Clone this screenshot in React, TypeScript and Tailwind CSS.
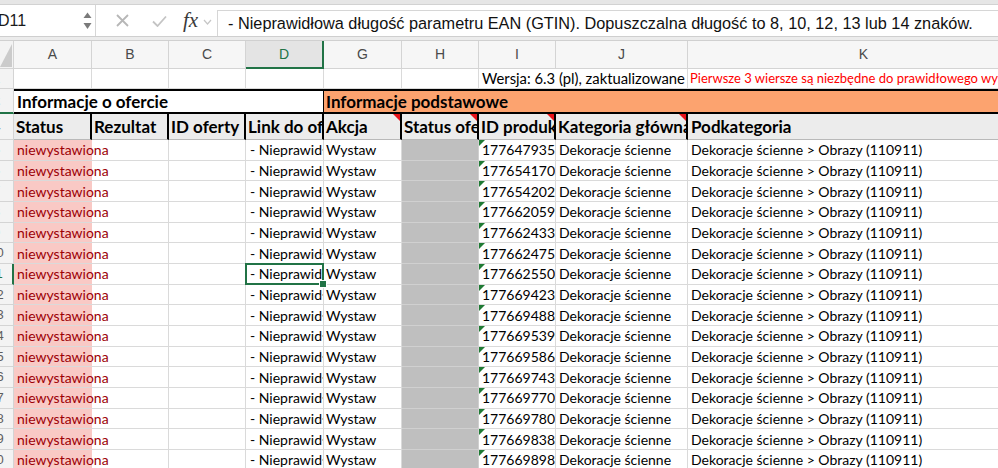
import React from "react";

const ids = [
  "1776479353",
  "1776541705",
  "1776542026",
  "1776620593",
  "1776624337",
  "1776624758",
  "1776625509",
  "1776694231",
  "1776694888",
  "1776695390",
  "1776695869",
  "1776697430",
  "1776697707",
  "1776697809",
  "1776698387",
  "1776698983",
];

const cellFont = { fontFamily: "Lato, 'Open Sans', sans-serif" };

function RedMark() {
  return (
    <svg className="absolute right-0 top-0" width="7" height="7">
      <polygon points="0,0 7,0 7,7" fill="#e8141b" />
    </svg>
  );
}

function GreenMark() {
  return (
    <svg className="absolute left-0 top-0" width="6" height="6">
      <polygon points="0,0 6,0 0,6" fill="#1f7a34" />
    </svg>
  );
}

function RowHead({
  n,
  active,
  className = "",
}: {
  n: string;
  active?: boolean;
  className?: string;
}) {
  return (
    <div
      className={`flex w-[34px] shrink-0 items-center justify-center border-b border-r border-[#d4d4d4] bg-[#f3f3f3] text-[13px] ${
        active ? "border-r-2 border-r-[#217346] text-[#217346]" : "text-[#5e5e5e]"
      } ${className}`}
      style={{ fontFamily: "'Liberation Sans', sans-serif" }}
    >
      {n}
    </div>
  );
}

export default function App() {
  return (
    <div className="h-[468px] w-[998px] overflow-hidden bg-white">
      {/* formula bar */}
      <div className="h-[5px] border-b border-[#d2d2d2] bg-[#e6e6e6]" />
      <div
        className="flex h-[32px] items-stretch border-b border-[#cfcfcf] bg-white"
        style={{ fontFamily: "'Liberation Sans', sans-serif" }}
      >
        <div className="relative flex w-[96px] shrink-0 items-center border-r border-[#d6d6d6] pl-0">
          <span className="-ml-[2px] text-[16px] text-[#1a1a1a]">D11</span>
          <svg className="absolute left-[83px] top-[7px]" width="9" height="18">
            <polygon points="0.5,6 4.5,0.5 8.5,6" fill="#7a7a7a" />
            <polygon points="0.5,11 8.5,11 4.5,17" fill="#7a7a7a" />
          </svg>
        </div>
        <div className="flex w-[121px] shrink-0 items-center">
          <svg className="ml-[20px]" width="13" height="13">
            <path d="M1 1 L12 12 M12 1 L1 12" stroke="#b7b7b7" strokeWidth="1.8" />
          </svg>
          <svg className="ml-[23px]" width="15" height="12">
            <path d="M1 6.5 L5.5 11 L14 1.5" stroke="#c4c4c4" strokeWidth="1.8" fill="none" />
          </svg>
          <span
            className="ml-[16px] text-[21px] italic leading-none text-[#3a3a3a]"
            style={{ fontFamily: "'Liberation Serif', serif" }}
          >
            fx
          </span>
          <svg className="ml-[5px] mt-[3px]" width="9" height="6">
            <path d="M1 1 L4.5 5 L8 1" stroke="#c6c6c6" strokeWidth="1.2" fill="none" />
          </svg>
        </div>
        <div className="mt-[5px] flex flex-1 items-center overflow-hidden whitespace-nowrap border-l border-t border-[#d6d6d6] pl-[10px] text-[16.3px] text-[#111]">
          - Nieprawidłowa długość parametru EAN (GTIN). Dopuszczalna długość to 8, 10, 12, 13 lub 14 znaków.
        </div>
      </div>
      <div className="h-[4px] border-b border-[#d0d0d0] bg-[#ececec]" />

      {/* sheet */}
      <div className="-ml-[20px] w-[1060px]">
        {/* column headers */}
        <div
          className="flex h-[28px] text-[14px] text-[#4a4a4a]"
          style={{ fontFamily: "'Liberation Sans', sans-serif" }}
        >
          <div className="relative w-[34px] shrink-0 border-b border-r border-[#d4d4d4] bg-[#f3f3f3]">
            <svg className="absolute left-[20px] top-[3px]" width="12" height="23">
              <polygon points="12,0 12,23 0,23" fill="#cbcbcb" />
            </svg>
          </div>
          <div className="flex w-[78px] shrink-0 items-center justify-center border-b border-r border-[#d4d4d4] bg-[#f6f6f6]">A</div>
          <div className="flex w-[77px] shrink-0 items-center justify-center border-b border-r border-[#d4d4d4] bg-[#f6f6f6]">B</div>
          <div className="flex w-[77px] shrink-0 items-center justify-center border-b border-r border-[#d4d4d4] bg-[#f6f6f6]">C</div>
          <div className="flex w-[78px] shrink-0 items-center justify-center border-b-2 border-r-2 border-[#217346] bg-[#e4e4e4] text-[#217346]">D</div>
          <div className="flex w-[78px] shrink-0 items-center justify-center border-b border-r border-[#d4d4d4] bg-[#f6f6f6]">G</div>
          <div className="flex w-[77px] shrink-0 items-center justify-center border-b border-r border-[#d4d4d4] bg-[#f6f6f6]">H</div>
          <div className="flex w-[77px] shrink-0 items-center justify-center border-b border-r border-[#d4d4d4] bg-[#f6f6f6]">I</div>
          <div className="flex w-[132px] shrink-0 items-center justify-center border-b border-r border-[#d4d4d4] bg-[#f6f6f6]">J</div>
          <div className="flex w-[352px] shrink-0 items-center justify-center border-b border-r border-[#d4d4d4] bg-[#f6f6f6]">K</div>
        </div>

        {/* row 1 */}
        <div className="flex h-[20px] text-[14px] text-black" style={cellFont}>
          <RowHead n="1" />
          <div className="w-[78px] shrink-0 border-b border-r border-[#dadada]" />
          <div className="w-[77px] shrink-0 border-b border-r border-[#dadada]" />
          <div className="w-[77px] shrink-0 border-b border-r border-[#dadada]" />
          <div className="w-[78px] shrink-0 border-b border-r border-[#dadada]" />
          <div className="w-[78px] shrink-0 border-b border-r border-[#dadada]" />
          <div className="w-[77px] shrink-0 border-b border-r border-[#dadada]" />
          <div className="flex w-[209px] shrink-0 items-center overflow-hidden whitespace-nowrap border-b border-r border-[#dadada] pl-[3px] text-[14.8px]">
            Wersja: 6.3 (pl), zaktualizowane
          </div>
          <div className="flex w-[352px] shrink-0 items-center overflow-hidden whitespace-nowrap border-b border-[#dadada] pl-[2px] text-[13px] text-[#ff0000]">
            Pierwsze 3 wiersze są niezbędne do prawidłowego wystawienia ofert
          </div>
        </div>

        {/* row 2 */}
        <div className="flex h-[25px] text-[17px] font-bold text-black" style={cellFont}>
          <RowHead n="2" className="border-b-2 border-b-[#217346]" />
          <div className="flex w-[310px] shrink-0 items-center border-y-2 border-r border-black bg-white pl-[3px]">
            Informacje o ofercie
          </div>
          <div className="flex w-[716px] shrink-0 items-center border-y-2 border-black bg-[#fca36f] pl-[2px]">
            Informacje podstawowe
          </div>
        </div>

        {/* row 4 */}
        <div className="flex h-[26px] text-[17px] font-bold text-black" style={cellFont}>
          <RowHead n="4" />
          {[
            ["w-[78px]", "Status", false],
            ["w-[77px]", "Rezultat", false],
            ["w-[77px]", "ID oferty", false],
            ["w-[78px]", "Link do oferty", false],
            ["w-[78px]", "Akcja", true],
            ["w-[77px]", "Status oferty", true],
            ["w-[77px]", "ID produktu", true],
            ["w-[132px]", "Kategoria główna", true],
          ].map(([w, label, mark]) => (
            <div
              key={label as string}
              className={`relative flex ${w} shrink-0 items-center overflow-hidden whitespace-nowrap border-b border-r-2 border-b-[#b9b9b9] border-r-black bg-[#ececec] pl-[2px]`}
            >
              {label}
              {mark ? <RedMark /> : null}
            </div>
          ))}
          <div className="flex w-[352px] shrink-0 items-center border-b border-[#b9b9b9] bg-[#ececec] pl-[3px]">
            Podkategoria
          </div>
        </div>

        {/* data rows */}
        {ids.map((id, i) => {
          const n = i + 5;
          const active = n === 11;
          return (
            <div key={id} className="flex h-[20.67px] text-[14px] text-black" style={cellFont}>
              <RowHead n={String(n)} active={active} />
              <div className="flex w-[78px] shrink-0 items-center whitespace-nowrap border-b border-[#dadada] bg-[#f9c9c5] pl-[3px] text-[#9c0006]">
                niewystawiona
              </div>
              <div className="w-[77px] shrink-0 border-b border-r border-[#dadada]" />
              <div className="w-[77px] shrink-0 border-b border-r border-[#dadada]" />
              <div className="relative flex w-[78px] shrink-0 items-center border-b border-r border-[#dadada]">
                <div className="w-full overflow-hidden whitespace-nowrap pl-[4px]">
                  - Nieprawidłowa długość parametru EAN (GTIN).
                </div>
                {active ? (
                  <div className="absolute -bottom-[1px] -left-[1px] -right-[1px] -top-[1px] z-10 border-2 border-[#217346]">
                    <div className="absolute -bottom-[4px] -right-[4px] h-[6px] w-[6px] bg-[#217346] outline outline-1 outline-white" />
                  </div>
                ) : null}
              </div>
              <div className="flex w-[78px] shrink-0 items-center border-b border-r border-[#dadada] pl-[2px]">
                Wystaw
              </div>
              <div className="w-[77px] shrink-0 border-b border-r border-[#d0d0d0] bg-[#bfbfbf]" />
              <div className="relative flex w-[77px] shrink-0 items-center overflow-hidden whitespace-nowrap border-b border-r border-[#dadada] pl-[3px]">
                {id}12
                <GreenMark />
              </div>
              <div className="flex w-[132px] shrink-0 items-center border-b border-r border-[#dadada] pl-[3px]">
                Dekoracje ścienne
              </div>
              <div className="flex w-[352px] shrink-0 items-center border-b border-[#dadada] pl-[3px]">
                Dekoracje ścienne &gt; Obrazy (110911)
              </div>
            </div>
          );
        })}
      </div>
    </div>
  );
}
